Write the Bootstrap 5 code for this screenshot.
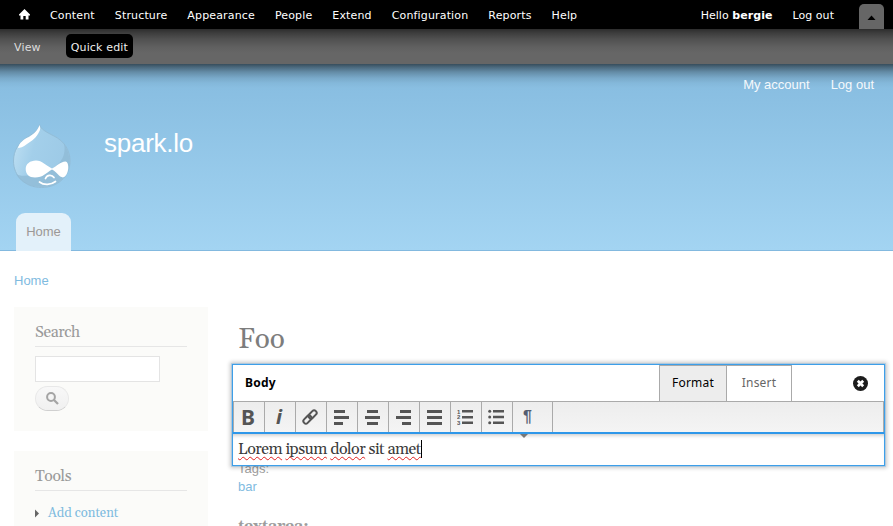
<!DOCTYPE html>
<html lang="en">
<head>
<meta charset="utf-8">
<title>Foo | spark.lo</title>
<meta name="viewport" content="width=device-width, initial-scale=1">
<link href="https://cdn.jsdelivr.net/npm/bootstrap@5.3.0/dist/css/bootstrap.min.css" rel="stylesheet">
<style>
body{font-family:"Liberation Sans",Arial,sans-serif;font-size:13px;line-height:18px;color:#9d9d9d;background:#fff}
.page{height:526px}
a{text-decoration:none;color:#7fbbdf}
svg{display:block;flex:none}
.serif{font-family:Georgia,Gelasio,"Liberation Serif",serif}
.admin-bar{height:29px;background:#000;font:11px/31px "DejaVu Sans",Verdana,sans-serif;letter-spacing:.05px;padding-left:19px}
.admin-bar a,.admin-bar span{color:#fff}
.home-icon{margin:9px 20px 0 0}
.admin-links{letter-spacing:.15px}
.admin-links a{margin-right:20px}
.tray-toggle{width:25px;height:25px;margin:4px 9px 0 25px;background:#666;border-radius:5px 5px 0 0}
.tray{height:35px;background:linear-gradient(#2d2d2d 0,#3d3d3d 4px,#505050 10px,#606060 18px,#666 24px);font:11px/19px "DejaVu Sans",Verdana,sans-serif;letter-spacing:.15px;padding:5px 14px}
.tray a{color:#ddd;line-height:27px}
.tray a.quick{margin-left:25px;height:24px;line-height:27px;padding:0 5px;background:#000;color:#eee;border-radius:5px}
.site-head{height:187px;border-bottom:1px solid #83b9df;background:linear-gradient(rgba(0,0,0,.59) 0,rgba(0,0,0,.45) 3px,rgba(0,0,0,.26) 8px,rgba(0,0,0,.1) 14px,rgba(0,0,0,.03) 19px,transparent 24px),linear-gradient(#85bbdf,#a3d4f2)}
.account{padding:12px 19px 0 0;gap:21px}
.account a{color:#f5f9fc}
.brand{padding:30px 0 0 12px;height:119px}
.site-title{font-size:26px;line-height:32px;letter-spacing:-.25px;color:#fff;margin:3px 0 0 32px}
.tab-home{width:55px;height:38px;margin-left:16px;background:#e3f1fa;border-radius:9px 9px 0 0;text-align:center;line-height:38px;color:#999;text-shadow:0 1px 0 #eee}
.crumb{height:56px;padding:21px 14px 0}
.side{width:194px;margin-left:14px;gap:20px}
.block{height:124px;background:#fbfbf9;padding:15px 21px 0}
.block h2{font-size:15.8px;letter-spacing:-.4px;line-height:20px;height:25px;border-bottom:1px solid #e6e6e6;color:#9a9a9a;margin:0;font-weight:400}
.menu-row{margin-top:13px}
.field{display:block;width:125px;height:26px;border:1px solid #e4e4e4;background:#fff;margin-top:9px}
.find{width:34px;height:25px;border:1px solid #e8e8e8;border-bottom-color:#d0d0d0;border-radius:13px;background:linear-gradient(#f8f8f8,#f0f0f0);padding:5px 0 0 10px;margin-top:4px}
.main{margin-left:24px;width:653px}
.main h1{font-size:28px;line-height:36px;height:34px;color:#7d7d7d;margin:15px 0 8px 6px;font-weight:400}
.editor{position:relative;z-index:1;height:102px;color:#000;font-family:"Noto Sans","Open Sans",sans-serif;font-size:12px;background:#fff;border:1px solid #3d9fe9;outline:1px solid rgba(80,170,240,.28);box-shadow:0 0 4px 2px rgba(0,0,0,.22);margin-bottom:-6px}
.ed-top{height:36px}
.ed-name{padding-left:12px;font-weight:700;letter-spacing:.2px}
.ed-tab{height:36px;border:1px solid #aaa;border-bottom:0;text-align:center;line-height:34px}
.ed-fmt{width:68px;background:#ededed;letter-spacing:.2px}
.ed-ins{width:65px;border-left:0;color:#666;letter-spacing:.2px}
.tools{height:31px;border:1px solid #aaa;border-bottom:0;background:linear-gradient(#ededed,#f4f4f4)}
.tool{width:31px;border-right:1px solid #aaa;display:flex;align-items:center;justify-content:center;color:#555;line-height:30px;padding-right:2px}
.tool-wide{width:40px}
.bold-t{font:700 21px/30px "Noto Sans",sans-serif}
.ital-t{font:italic 700 20px/30px "Noto Sans",sans-serif}
.pilcrow{padding-right:10px;font:700 16px/30px "Liberation Sans",sans-serif;color:#555d70}
.copy{position:relative;height:34px;border-top:2px solid #2e97e9;box-shadow:inset 0 4px 4px -3px rgba(0,0,0,.25);font-size:16px;letter-spacing:-.52px;line-height:20px;padding:5px 0 0 5px;color:#3b3b3b}
.bad{text-decoration:underline wavy #df2020 1px;text-underline-offset:2px;text-decoration-skip-ink:none}
.caret{display:inline-block;width:1px;height:18px;background:#000;vertical-align:-4px}
.drop-tip{position:absolute;left:287px;top:0;width:8px;height:4px;background:#777;clip-path:polygon(0 0,100% 0,50% 100%)}
.tag-list{padding-left:6px}
.area-label{font-weight:700;font-size:16px;letter-spacing:-.35px;line-height:20px;padding:20px 0 0 6px;height:30px}
</style>
<script src="https://cdn.jsdelivr.net/npm/bootstrap@5.3.0/dist/js/bootstrap.bundle.min.js"></script>
</head>
<body>
<div class="page overflow-hidden">
<nav class="admin-bar d-flex">
  <svg class="home-icon" width="11" height="11" viewBox="0 0 11 11" fill="#fff"><path d="M5.500 0L11 5.500V6.500H9.500V10.500H6.700V7H4.300V10.500H1.500V6.500H0V5.500Z"/></svg>
  <div class="admin-links d-flex flex-grow-1"><a href="#">Content</a><a href="#">Structure</a><a href="#">Appearance</a><a href="#">People</a><a href="#">Extend</a><a href="#">Configuration</a><a href="#">Reports</a><a href="#">Help</a></div>
  <span>Hello <b>bergie</b></span><a href="#" class="ms-3 ps-1">Log out</a>
  <div class="tray-toggle"><svg width="25" height="25"><path d="M8.500 16L12.500 11.500L16.500 16Z" fill="#000"/></svg></div>
</nav>
<div class="tray d-flex"><a href="#">View</a><a href="#" class="quick">Quick edit</a></div>
<header class="site-head">
  <div class="account d-flex justify-content-end"><a href="#">My account</a><a href="#">Log out</a></div>
  <div class="brand d-flex">
    <svg width="60" height="65" viewBox="0 0 60 65">
      <defs><linearGradient id="dropfill" x1="0" y1=".3" x2="1" y2=".6"><stop offset="0" stop-color="#bcdef2"/><stop offset=".35" stop-color="#a3cfea"/><stop offset="1" stop-color="#9cc9e6"/></linearGradient></defs>
      <path d="M27.500 .5C28.500 5 34 8 42 12C52 17 58 26 58 37C58 53 45 63.500 29.500 63.500C13 63.500 1.500 52 1.500 37C1.500 26 7 19 14 14C20 10 27 7 27.500 .5Z" fill="url(#dropfill)" stroke="#93bdd7"/>
      <path d="M52 20C55 34 46 44 30 49C20 52 8 53 4 50C10 60 20 63 30 63C46 63 57.500 52 57.500 37C57.500 31 55 24 52 20Z" fill="#8fb9d4" opacity=".75"/>
      <path d="M27.500 1C28 3 29 5 27 8C25 13 20 17 15 20C11 23 8 24 6 24C7 19 12 15 17 13C22 10 26 6 27.500 1Z" fill="#fff"/>
      <path d="M13.700 45C13.700 40 18 36.500 24 36.500C30 36.500 34 41.500 40 44.500C45 42 48 38 53.500 37.500C58 38 57 52 51 53.500C47 53 45 48 40 45.500C34 49 31 53.500 23 53.500C17 53.500 13.700 50 13.700 45Z" fill="#fff"/>
      <path d="M33.500 54.500C35 50.500 40 50.500 42 53.500M27.500 58C32 61.500 39 61 43.500 57.500" fill="none" stroke="#fff" stroke-width="1.700" stroke-linecap="round"/>
    </svg>
    <div class="site-title">spark.lo</div>
  </div>
  <div class="tab-home">Home</div>
</header>
<div class="crumb"><a href="#">Home</a></div>
<div class="d-flex align-items-start">
  <aside class="side d-flex flex-column">
    <section class="block serif"><h2>Search</h2><input class="field" type="text" aria-label="Search">
      <div class="find"><svg width="13" height="13" viewBox="0 0 13 13" fill="none" stroke="#a4a4a4"><circle cx="5" cy="5" r="3.900" stroke-width="2"/><path d="M8 8L12 12" stroke-width="2.300"/></svg></div></section>
    <section class="block serif"><h2>Tools</h2>
      <div class="menu-row d-flex align-items-center"><svg width="13" height="9"><path d="M0 .5L4 4.500L0 8.500Z" fill="#666"/></svg><a href="#">Add content</a></div></section>
  </aside>
  <main class="main">
    <h1 class="serif">Foo</h1>
    <div class="editor">
      <div class="ed-top d-flex align-items-center"><div class="ed-name flex-grow-1">Body</div><div class="ed-tab ed-fmt">Format</div><div class="ed-tab ed-ins">Insert</div>
        <svg width="92" height="36" viewBox="0 0 92 36"><circle cx="68.500" cy="18.500" r="7.500" fill="#1c1c1c"/><path d="M65.800 15.800L71.200 21.200M71.200 15.800L65.800 21.200" stroke="#fff" stroke-width="2.700"/></svg></div>
      <div class="tools d-flex">
        <div class="tool bold-t">B</div><div class="tool ital-t">i</div>
        <div class="tool"><svg width="16" height="16" viewBox="0 0 16 16" fill="none" stroke="#555" stroke-width="2"><g transform="rotate(-45 8 8)"><rect x="-.3" y="5.500" width="9.300" height="5" rx="2.500"/><rect x="7" y="5.500" width="9.300" height="5" rx="2.500"/></g></svg></div>
        <div class="tool"><svg width="15" height="15" fill="#555"><path d="M0 0h11v3H0zM0 6h15v3H0zM0 12h9v3H0z"/></svg></div>
        <div class="tool"><svg width="15" height="15" fill="#555"><path d="M2 0h11v3H2zM0 6h15v3H0zM2 12h11v3H2z"/></svg></div>
        <div class="tool"><svg width="15" height="15" fill="#555"><path d="M4 0h11v3H4zM0 6h15v3H0zM6 12h9v3H6z"/></svg></div>
        <div class="tool"><svg width="15" height="15" fill="#555"><path d="M0 0h15v3H0zM0 6h15v3H0zM0 12h15v3H0z"/></svg></div>
        <div class="tool"><svg width="16" height="16" fill="#555" font-family="Liberation Sans" font-size="6" font-weight="700"><path d="M5 1h11v2.500H5zM5 7h11v2.500H5zM5 12.500h11v2.500H5z"/><text x="0" y="4.500">1</text><text x="0" y="10.300">2</text><text x="0" y="16">3</text></svg></div>
        <div class="tool"><svg width="16" height="16" fill="#555"><path d="M5 1h11v2.500H5zM5 6.700h11v2.500H5zM5 12.500h11v2.500H5z"/><circle cx="1.700" cy="2.300" r="1.500"/><circle cx="1.700" cy="8" r="1.500"/><circle cx="1.700" cy="13.700" r="1.500"/></svg></div>
        <div class="tool tool-wide pilcrow">¶</div>
      </div>
      <div class="copy serif"><span class="bad">Lorem</span> <span class="bad">ipsum</span> <span class="bad">dolor</span> sit <span class="bad">amet</span><span class="caret"></span><i class="drop-tip"></i></div>
    </div>
    <div class="tag-list">Tags:<br><a href="#">bar</a></div>
    <div class="serif area-label">textarea:</div>
  </main>
</div>
</div>
</body>
</html>
